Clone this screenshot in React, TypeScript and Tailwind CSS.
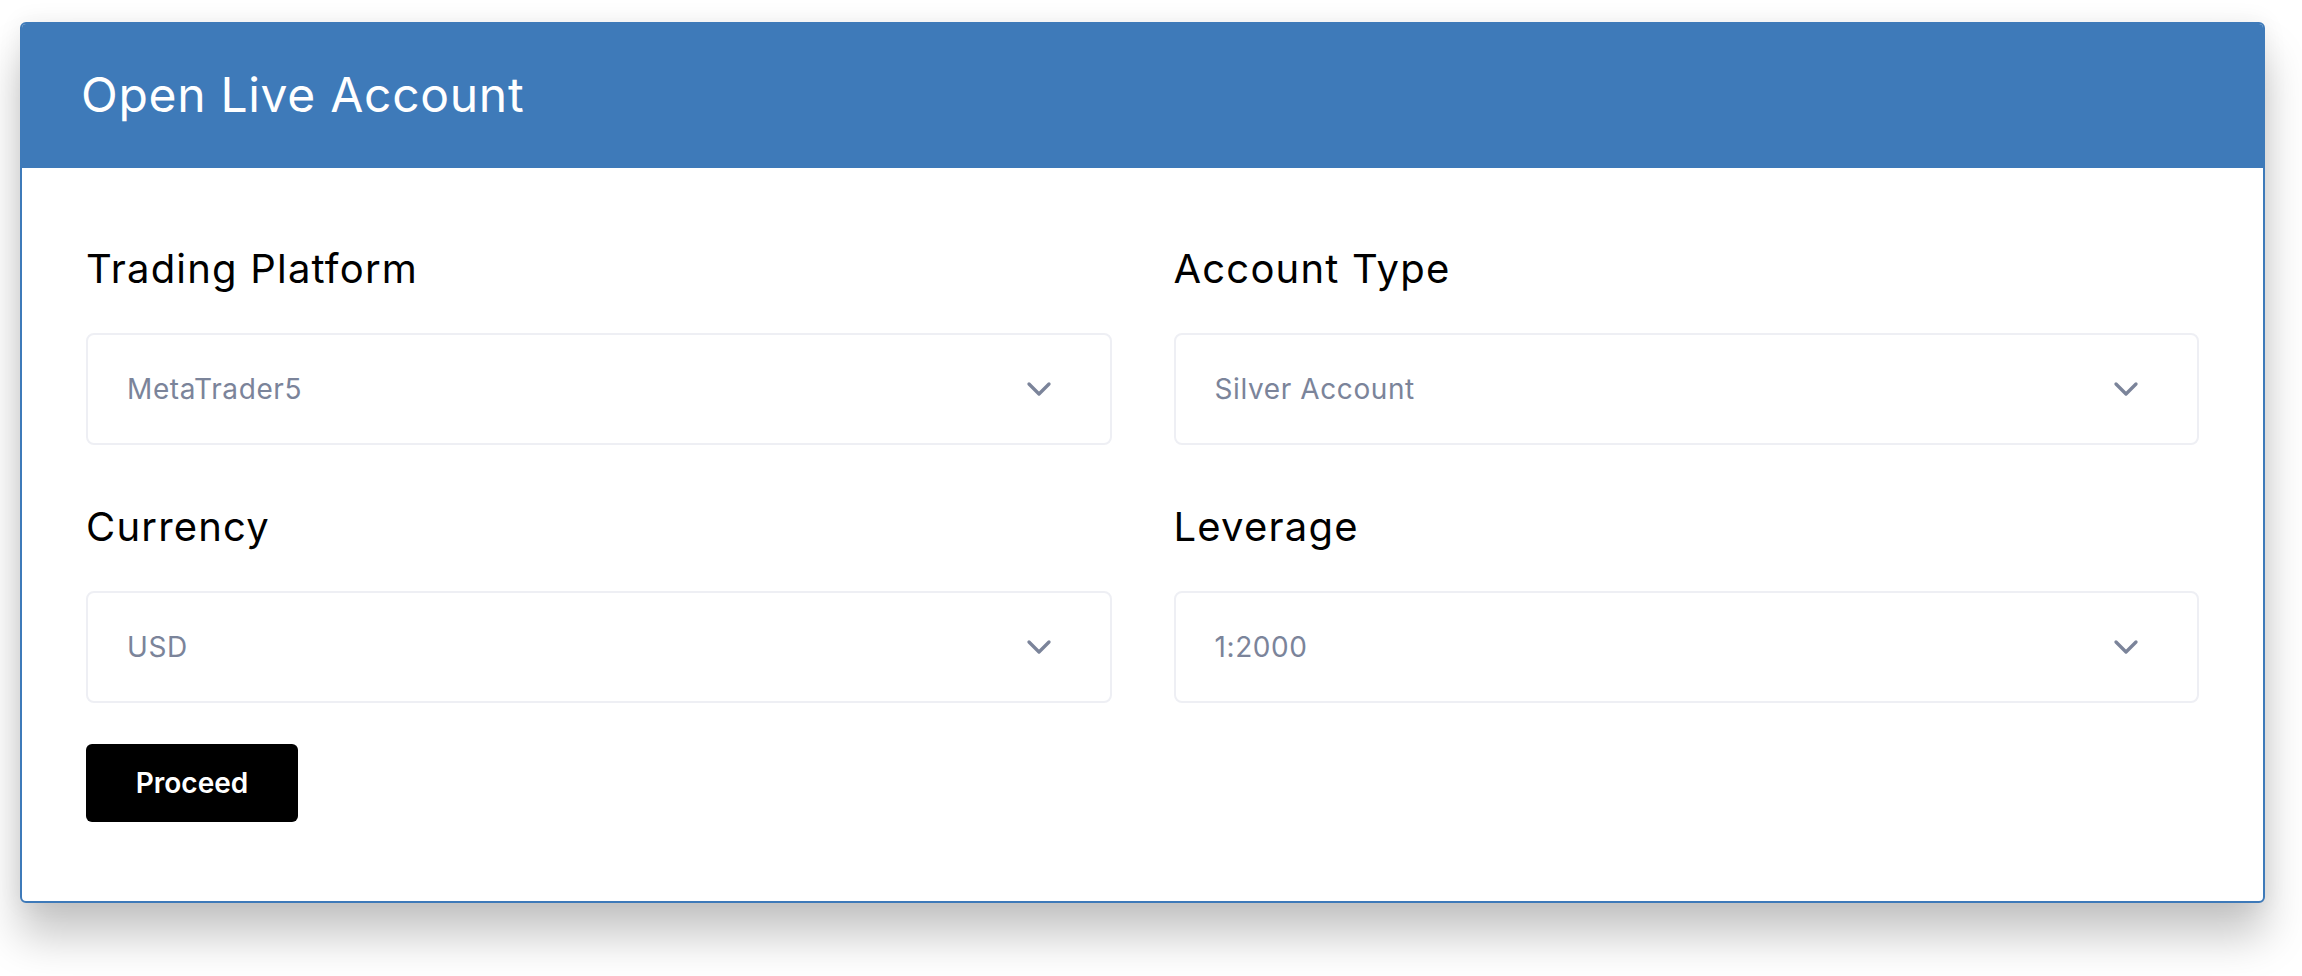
import { ChevronDown } from "lucide-react";

const fields = [
  { label: "Trading Platform", value: "MetaTrader5" },
  { label: "Account Type", value: "Silver Account" },
  { label: "Currency", value: "USD" },
  { label: "Leverage", value: "1:2000" },
];

function SelectField({ label, value }: { label: string; value: string }) {
  return (
    <div className="flex flex-col">
      <label className="mb-[40px] text-[40px] leading-[48px] tracking-[1.2px] text-black">{label}</label>
      <div className="flex h-[112px] items-center justify-between rounded-lg border-2 border-[#eeeff4] bg-white pl-[39px] pr-[51px]">
        <span className="text-[28px] tracking-[0.6px] text-[#7b849a]">{value}</span>
        <ChevronDown size={40} strokeWidth={2} className="text-[#7b849a]" />
      </div>
    </div>
  );
}

export default function App() {
  return (
    <div className="min-h-screen bg-white pl-[20px] pt-[22px] font-['Inter','Liberation_Sans',sans-serif]">
      <div className="w-[2245px] overflow-hidden rounded-md border-2 border-[#3e7ab9] bg-white shadow-[0_34px_44px_rgba(0,0,0,0.22),0_0_24px_rgba(0,0,0,0.07)]">
        {/* Header */}
        <div className="flex h-[144px] items-center bg-[#3e7ab9] pb-[3px] pl-[59px]">
          <h1 className="text-[48px] leading-none tracking-[0.7px] text-white">Open Live Account</h1>
        </div>

        {/* Form */}
        <div className="px-[64px] pb-[79px] pt-[77px]">
          <div className="grid grid-cols-2 gap-x-[62px] gap-y-[58px]">
            {fields.map((f) => (
              <SelectField key={f.label} label={f.label} value={f.value} />
            ))}
          </div>
          <button className="mt-[41px] h-[78px] w-[212px] rounded-md bg-black text-[28px] font-semibold text-white">
            Proceed
          </button>
        </div>
      </div>
    </div>
  );
}
